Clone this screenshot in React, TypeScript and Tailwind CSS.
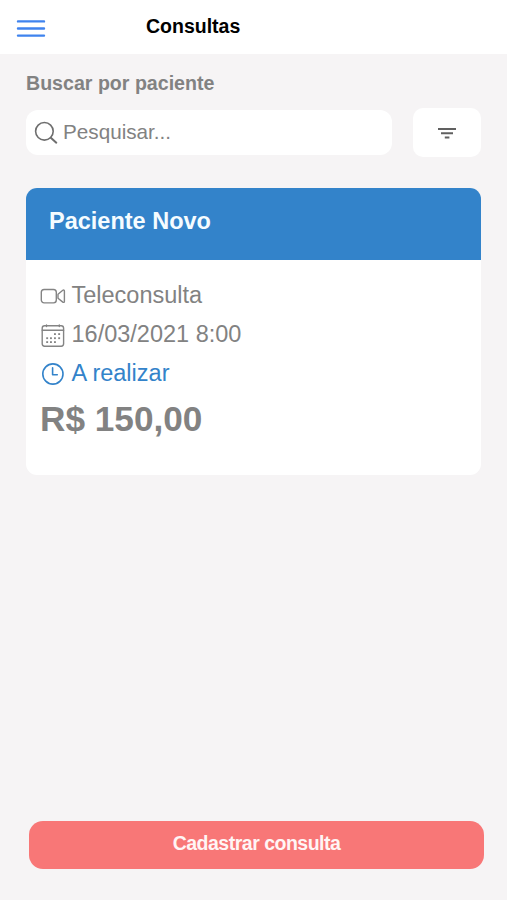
import React from "react";

function MenuIcon() {
  return (
    <svg width="30" height="20" viewBox="0 0 30 20" fill="none" stroke="#3f83ee" strokeWidth="2.4" strokeLinecap="round">
      <path d="M2 3.4h26M2 10.5h26M2 17.6h26" />
    </svg>
  );
}

function SearchIcon() {
  return (
    <svg width="24" height="24" viewBox="0 0 24 24" fill="none" stroke="#6e6e6e" strokeWidth="1.6" strokeLinecap="round">
      <circle cx="10.4" cy="10.3" r="8.8" />
      <path d="M16.8 16.7l5.5 5" strokeWidth="2" />
    </svg>
  );
}

function FilterIcon() {
  return (
    <svg width="20" height="14" viewBox="0 0 20 14" fill="none" stroke="#606060" strokeWidth="2">
      <path d="M1 3h18M4 7.300h12M7.800 11.500h4.600" />
    </svg>
  );
}

function VideoIcon() {
  return (
    <svg width="26" height="24" viewBox="0 0 26 24" fill="none" stroke="#848484" strokeWidth="1.400" strokeLinejoin="round">
      <rect x="1.300" y="5.500" width="15" height="13.400" rx="2.800" />
      <path d="M18 10.200l4.800-3.900c.8-.6 1.600-.3 1.600.7v10.400c0 1-.8 1.300-1.600.7l-4.800-3.900z" />
    </svg>
  );
}

const calendarDots = [
  [14, 11.200], [18.200, 11.200],
  [6.200, 15.300], [10, 15.300], [14, 15.300], [18.200, 15.300],
  [6.200, 19.200], [10, 19.200], [14, 19.200],
];

function CalendarIcon() {
  return (
    <svg width="26" height="26" viewBox="0 0 26 26" fill="none" stroke="#848484" strokeWidth="1.400" strokeLinecap="round">
      <rect x="2.200" y="3.800" width="21.400" height="20.400" rx="2.400" />
      <path d="M2.200 8.200h21.400M6.500 2.900v1.700M19.300 2.900v1.700" />
      {calendarDots.map(([x, y]) => (
        <rect key={`${x}-${y}`} x={x} y={y} width="1.900" height="1.800" fill="#848484" stroke="none" />
      ))}
    </svg>
  );
}

function ClockIcon() {
  return (
    <svg width="26" height="24" viewBox="0 0 26 24" fill="none" stroke="#3383ca" strokeWidth="1.600" strokeLinecap="round" strokeLinejoin="round">
      <circle cx="12.900" cy="12" r="10.100" />
      <path d="M12.600 5.900v6.900h4.700" />
    </svg>
  );
}

export default function App() {
  return (
    <div className="flex h-[900px] w-[507px] flex-col bg-[#f6f4f5] font-['Liberation_Sans',Arial,sans-serif] text-[#828282]">
      <header className="flex h-[54px] shrink-0 items-center bg-white pl-4">
        <button className="mt-[2px] w-[130px]" aria-label="Menu">
          <MenuIcon />
        </button>
        <h1 className="mb-0.5 text-[19.5px] leading-6 font-bold text-black">Consultas</h1>
      </header>

      <main className="flex grow flex-col pr-[26px] pl-[26px]">
        <label className="mt-[17px] text-[19.600px] leading-6 font-bold">Buscar por paciente</label>
        <div className="mt-[13px] flex items-center justify-between">
          <div className="flex h-[45px] w-[366px] items-center rounded-xl bg-white pl-2">
            <SearchIcon />
            <span className="mb-0.5 ml-[5px] text-[20.700px] leading-6">Pesquisar...</span>
          </div>
          <button className="flex h-[49px] w-[68px] items-center justify-center rounded-[10px] bg-white" aria-label="Filtrar">
            <FilterIcon />
          </button>
        </div>

        <section className="mt-[31px] h-[287px] overflow-hidden rounded-[11px] bg-white">
          <h2 className="flex h-[72px] items-center bg-[#3383ca] pb-[4px] pl-[23px] text-[23.500px] font-bold text-[#f5fcff]">
            Paciente Novo
          </h2>
          <ul className="pt-4 pl-[14px] text-[23.500px] leading-[39px]">
            <li className="flex h-[39px] items-center gap-[5.500px]">
              <VideoIcon />
              <span>Teleconsulta</span>
            </li>
            <li className="flex h-[39px] items-center gap-[5.500px]">
              <CalendarIcon />
              <span>16/03/2021 8:00</span>
            </li>
            <li className="flex h-[39px] items-center gap-[5.500px] text-[#3383ca]">
              <ClockIcon />
              <span>A realizar</span>
            </li>
          </ul>
          <p className="mt-1.5 pl-[14px] text-[35.200px] leading-10 font-bold">R$ 150,00</p>
        </section>
      </main>

      <footer className="flex shrink-0 pr-[23px] pb-[31px] pl-[29px]">
        <button className="h-12 grow rounded-[14px] bg-[#f87777] pb-[2px] text-[19.500px] font-bold tracking-[-0.500px] text-[#fff5f5]">
          Cadastrar consulta
        </button>
      </footer>
    </div>
  );
}
